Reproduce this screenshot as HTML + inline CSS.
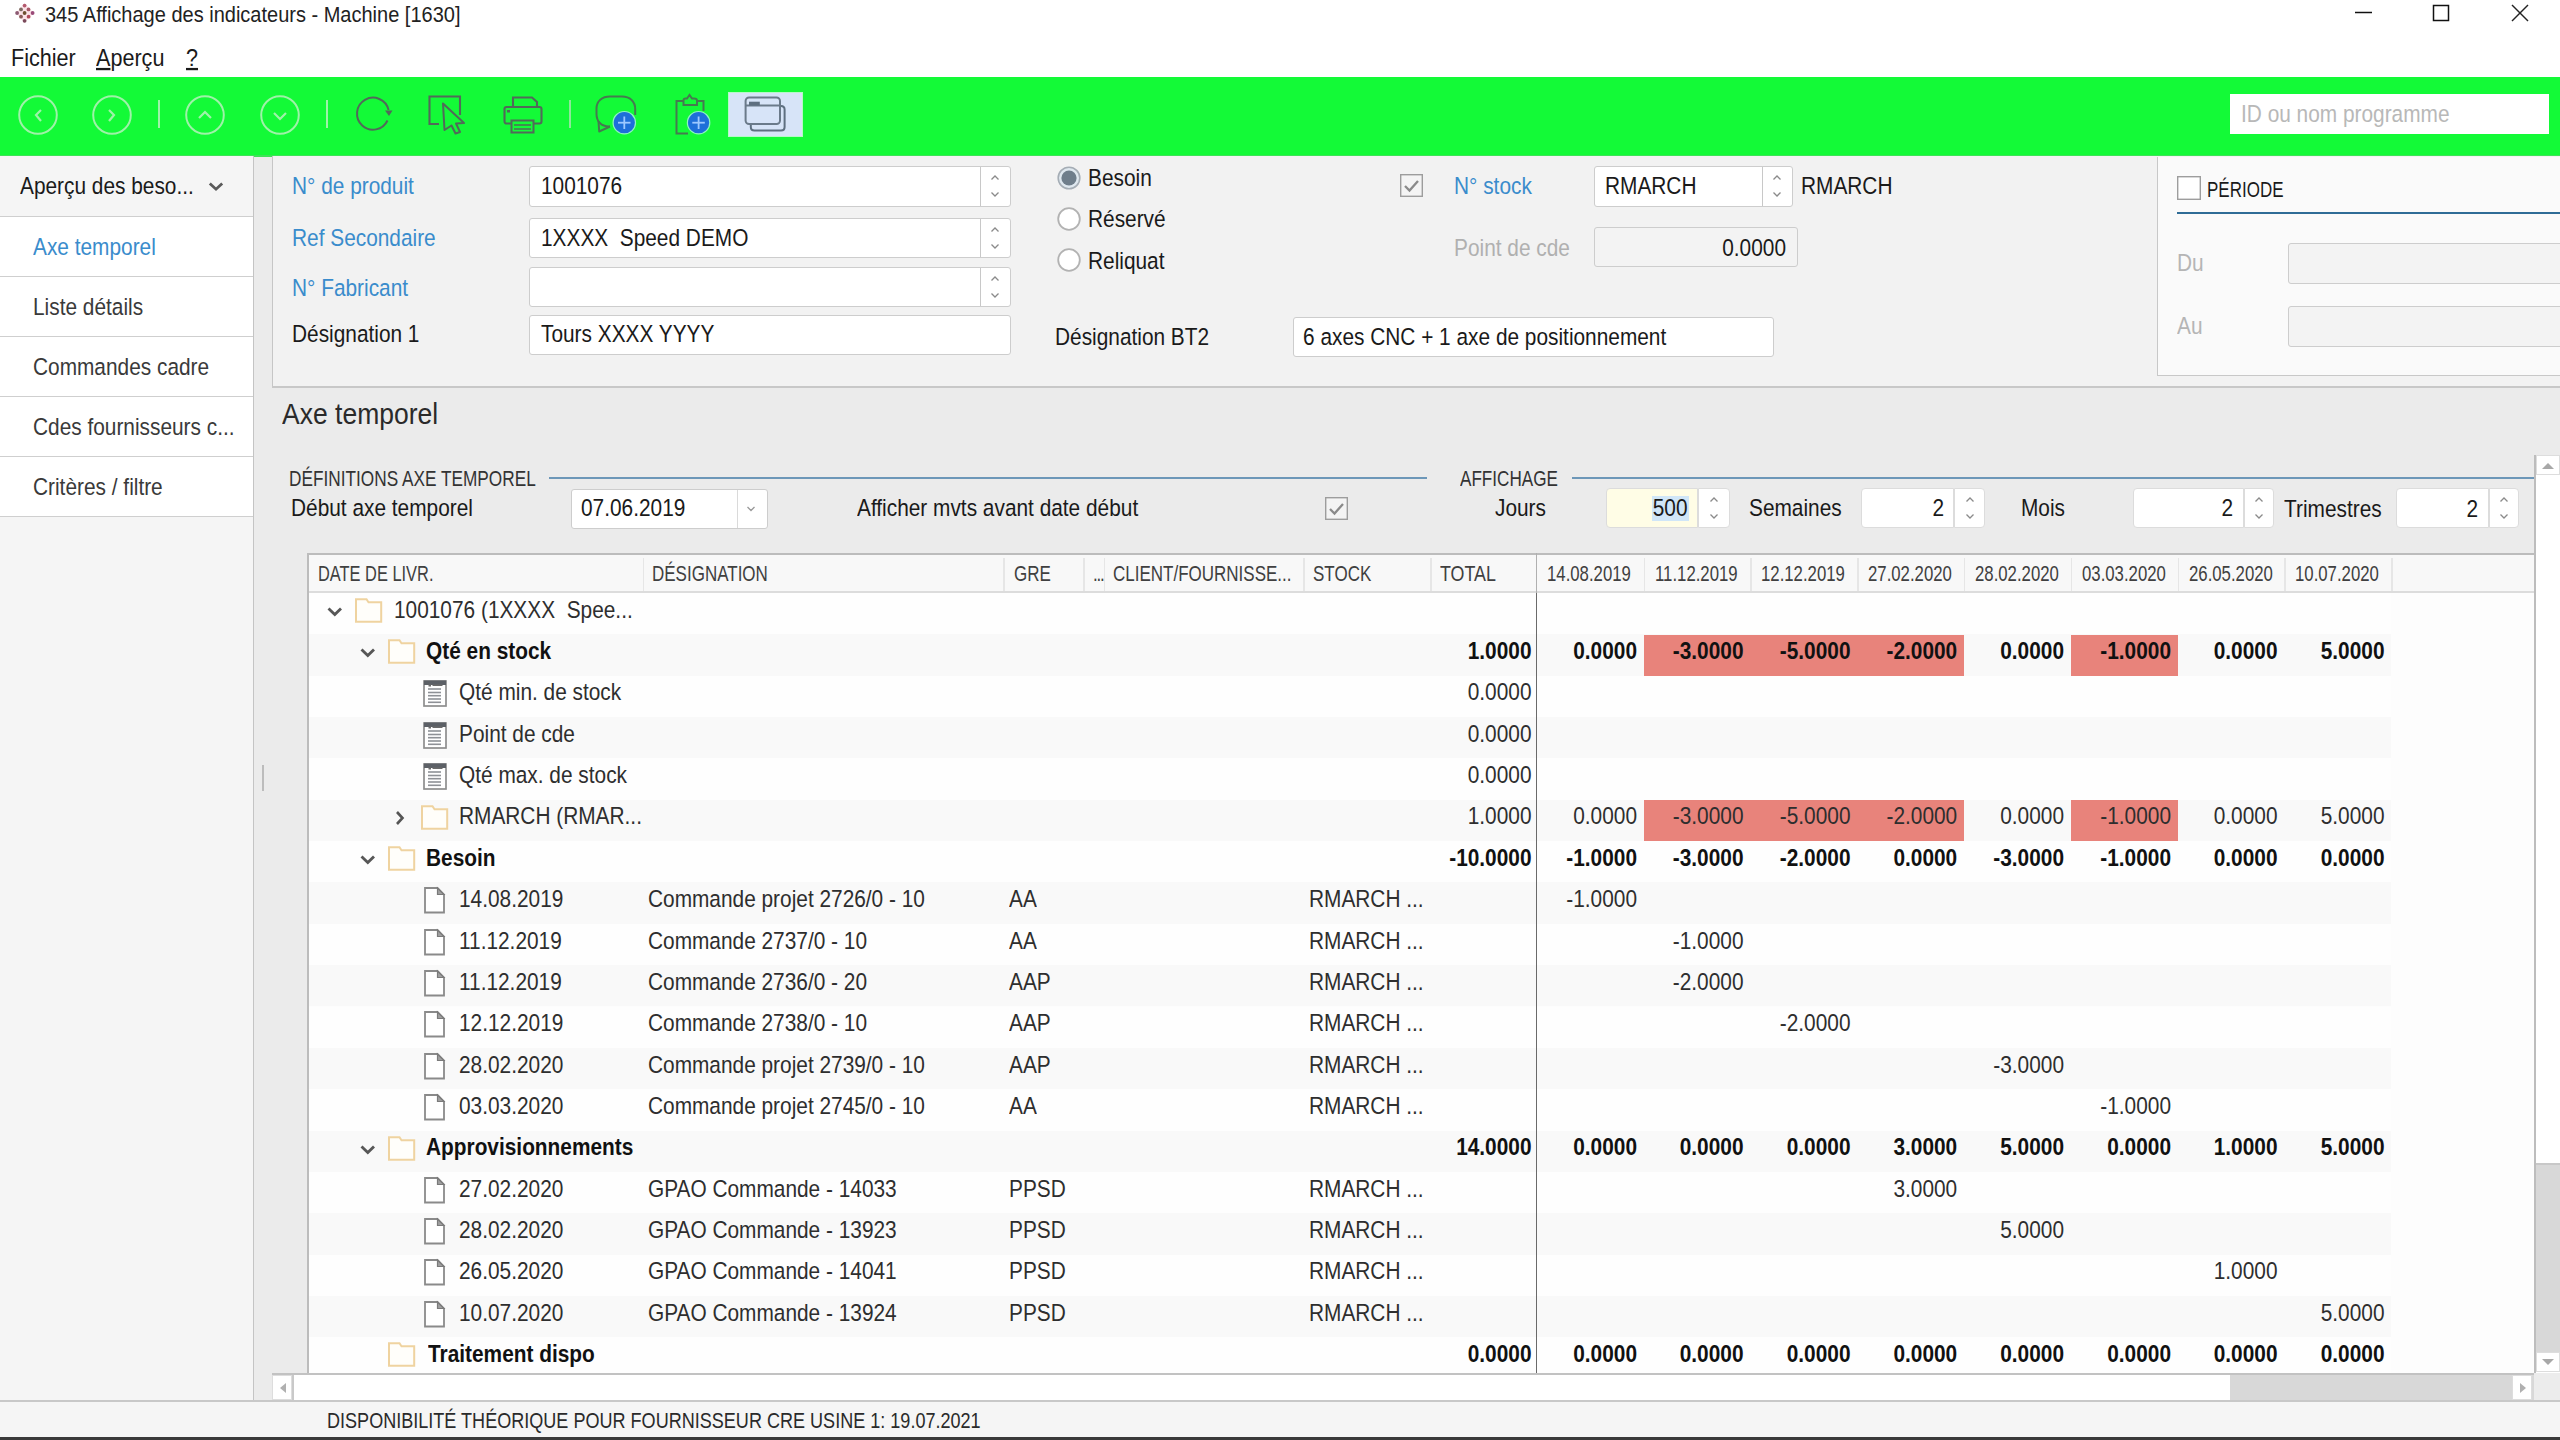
<!DOCTYPE html><html><head><meta charset="utf-8"><style>
html,body{margin:0;padding:0;width:2560px;height:1440px;overflow:hidden;background:#ebebeb;}
body{position:relative;font-family:"Liberation Sans", sans-serif;}
.t{position:absolute;white-space:nowrap;line-height:1;transform:scaleY(1.14);transform-origin:0 62%;}
.b{position:absolute;box-sizing:border-box;}
svg{position:absolute;overflow:visible;}
</style></head><body>
<div class="b" style="left:0px;top:0px;width:2560px;height:77px;background:#ffffff;"></div>
<svg style="left:0;top:0" width="50" height="30"><polygon points="24.6,3 33.5,13 24.6,23 16,13" fill="#fbe3e8"/><circle cx="24.6" cy="5.6" r="1.9" fill="#b45a6e"/><circle cx="21.0" cy="9.4" r="1.9" fill="#7e6a62"/><circle cx="28.5" cy="9.4" r="1.9" fill="#a85a68"/><circle cx="17.1" cy="13" r="1.9" fill="#8c5a72"/><circle cx="24.6" cy="13" r="1.9" fill="#6e5030"/><circle cx="32.6" cy="13" r="1.9" fill="#9a4a78"/><circle cx="21.0" cy="16.7" r="1.9" fill="#8a5a58"/><circle cx="28.6" cy="16.7" r="1.9" fill="#b04a5a"/><circle cx="24.6" cy="20.8" r="1.9" fill="#7a4a5a"/></svg>
<div class="t" style="left:45px;top:4px;font-size:20px;color:#222;">345 Affichage des indicateurs - Machine [1630]</div>
<svg style="left:2340px;top:0" width="220" height="30"><line x1="15" y1="12.5" x2="32" y2="12.5" stroke="#111" stroke-width="1.5"/><rect x="93.5" y="5.5" width="15" height="15" fill="none" stroke="#111" stroke-width="1.5"/><line x1="172" y1="5" x2="188" y2="21" stroke="#222" stroke-width="1.5"/><line x1="188" y1="5" x2="172" y2="21" stroke="#222" stroke-width="1.5"/></svg>
<div class="t" style="left:11px;top:47px;font-size:21.6px;color:#1a1a1a;">Fichier</div>
<div class="t" style="left:96px;top:47px;font-size:21.6px;color:#1a1a1a;"><u>A</u>perçu</div>
<div class="t" style="left:186px;top:47px;font-size:21.6px;color:#1a1a1a;"><u>?</u></div>
<div class="b" style="left:0px;top:77px;width:2560px;height:80px;background:#13fa37;"></div>
<div class="b" style="left:0px;top:154.5px;width:2560px;height:2.5px;background:#3ee257;"></div>
<svg style="left:12.5px;top:90px" width="50" height="50"><circle cx="25" cy="25" r="18.8" fill="none" stroke="#9ff2a9" stroke-width="2"/><polyline points="28,20 23,25 28,31" fill="none" stroke="#9ff2a9" stroke-width="2.2"/></svg>
<svg style="left:87px;top:90px" width="50" height="50"><circle cx="25" cy="25" r="18.8" fill="none" stroke="#9ff2a9" stroke-width="2"/><polyline points="22,20 27,25 22,31" fill="none" stroke="#9ff2a9" stroke-width="2.2"/></svg>
<svg style="left:180px;top:90px" width="50" height="50"><circle cx="25" cy="25" r="18.8" fill="none" stroke="#9ff2a9" stroke-width="2"/><polyline points="19,28 25,22 31,28" fill="none" stroke="#9ff2a9" stroke-width="2.2"/></svg>
<svg style="left:254.5px;top:90px" width="50" height="50"><circle cx="25" cy="25" r="18.8" fill="none" stroke="#9ff2a9" stroke-width="2"/><polyline points="19,23 25,29 31,23" fill="none" stroke="#9ff2a9" stroke-width="2.2"/></svg>
<div class="b" style="left:158px;top:100px;width:2px;height:28px;background:#9ff2a9;"></div>
<div class="b" style="left:325.5px;top:100px;width:2px;height:28px;background:#9ff2a9;"></div>
<div class="b" style="left:569px;top:100px;width:1.5px;height:28px;background:#8ee89a;"></div>
<svg style="left:340px;top:80px" width="60" height="60"><path d="M 47.5 40.5 A 16 16 0 1 1 48.6 30" fill="none" stroke="#52695a" stroke-width="2.0"/><polygon points="45,30.5 52.5,30.5 49,36" fill="#52695a"/></svg>
<svg style="left:420px;top:90px" width="60" height="50"><polyline points="19,34 9.5,34 9.5,6.5 40,6.5 40,25" fill="none" stroke="#52695a" stroke-width="2.1"/><path d="M 23 13.5 L 44 33 L 36 33.5 L 40 42 L 35.5 43.5 L 31.5 35.5 L 24.5 40 Z" fill="none" stroke="#52695a" stroke-width="2.0" stroke-linejoin="round"/></svg>
<svg style="left:500px;top:90px" width="50" height="50"><path d="M 13 16 L 13 7.5 L 32 7.5 L 37 12 L 37 16" fill="none" stroke="#52695a" stroke-width="2.1"/><rect x="4.5" y="17" width="37" height="16.5" rx="2" fill="none" stroke="#52695a" stroke-width="2.1"/><rect x="11.5" y="30.5" width="22" height="12" fill="#13fa37" stroke="#52695a" stroke-width="2.0"/><line x1="14" y1="35" x2="31" y2="35" stroke="#52695a" stroke-width="1.5"/><line x1="14" y1="39" x2="31" y2="39" stroke="#52695a" stroke-width="1.5"/><rect x="7" y="20" width="3" height="2.5" fill="#52695a"/></svg>
<svg style="left:590px;top:90px" width="60" height="50"><path d="M 20 36.5 C 11 37 6.5 31 6.5 24 L 6.5 18.5 C 6.5 11 12 6.5 20 6.5 L 32 6.5 C 40 6.5 45.2 11.5 45.2 19 L 45.2 25" fill="none" stroke="#467a50" stroke-width="2.0"/><path d="M 8.5 31 L 9.2 41.5 L 20 36.5" fill="none" stroke="#467a50" stroke-width="2.0" stroke-linejoin="round"/><circle cx="34.3" cy="32.7" r="11.2" fill="#1e6fd9" stroke="#8ff5c0" stroke-width="1.2"/><line x1="34.3" y1="26.5" x2="34.3" y2="39" stroke="#9cc8ff" stroke-width="1.8"/><line x1="28" y1="32.7" x2="40.5" y2="32.7" stroke="#9cc8ff" stroke-width="1.8"/></svg>
<svg style="left:665px;top:90px" width="60" height="50"><path d="M 23 43.5 L 11.5 43.5 L 11.5 11 L 18.5 11 M 32 11 L 38.5 11 L 38.5 21" fill="none" stroke="#467a50" stroke-width="2.0"/><path d="M 18.5 15 L 18.5 10.5 Q 18.5 8.5 20.5 8.5 L 22 8.5 L 24.5 5 L 27 8.5 L 29 8.5 Q 32 8.5 32 10.5 L 32 15 Z" fill="none" stroke="#467a50" stroke-width="2"/><circle cx="33.6" cy="32.7" r="11.2" fill="#1e6fd9" stroke="#8ff5c0" stroke-width="1.2"/><line x1="33.6" y1="26.5" x2="33.6" y2="39" stroke="#9cc8ff" stroke-width="1.8"/><line x1="27.3" y1="32.7" x2="39.8" y2="32.7" stroke="#9cc8ff" stroke-width="1.8"/></svg>
<div class="b" style="left:728px;top:92px;width:74.5px;height:45px;background:#d7e4f8;border:1.5px solid #b8f8c8;"></div>
<svg style="left:728px;top:92px" width="75" height="45"><path d="M 22.8 32 L 22.8 35 Q 22.8 38.5 26.5 38.5 L 53 38.5 Q 56.6 38.5 56.6 35 L 56.6 17.5 Q 56.6 14 53 14 L 52 14" fill="none" stroke="#5e6f80" stroke-width="2"/><rect x="17.6" y="5.5" width="34.4" height="26.5" rx="3.5" fill="#d7e4f8" stroke="#6a7a8a" stroke-width="2"/><line x1="17.6" y1="13.4" x2="52" y2="13.4" stroke="#6a7a8a" stroke-width="2"/><rect x="21" y="9.7" width="10.8" height="3.7" fill="#5e6f80"/></svg>
<div class="b" style="left:2230px;top:93.5px;width:319px;height:40px;background:#ffffff;"></div>
<div class="t" style="left:2241px;top:104px;font-size:20.85px;color:#b8b8b8;">ID ou nom programme</div>
<div class="b" style="left:0px;top:156px;width:254px;height:1244px;background:#f5f5f5;border-right:1.5px solid #c4c4c4;"></div>
<div class="t" style="left:20px;top:176px;font-size:20.85px;color:#1a1a1a;">Aperçu des beso...</div>
<svg style="left:205px;top:178px" width="22" height="16"><polyline points="4.8,5.5 11,11.2 17.2,5.5" fill="none" stroke="#5a5a5a" stroke-width="2.8"/></svg>
<div class="b" style="left:0px;top:216px;width:253px;height:61px;background:#ffffff;border-top:1px solid #cfcfcf;border-bottom:1px solid #cfcfcf;"></div>
<div class="t" style="left:33px;top:237px;font-size:20.85px;color:#3a8ccc;">Axe temporel</div>
<div class="b" style="left:0px;top:276px;width:253px;height:61px;background:#ffffff;border-top:1px solid #cfcfcf;border-bottom:1px solid #cfcfcf;"></div>
<div class="t" style="left:33px;top:297px;font-size:20.85px;color:#3a3a3a;">Liste détails</div>
<div class="b" style="left:0px;top:336px;width:253px;height:61px;background:#ffffff;border-top:1px solid #cfcfcf;border-bottom:1px solid #cfcfcf;"></div>
<div class="t" style="left:33px;top:357px;font-size:20.85px;color:#3a3a3a;">Commandes cadre</div>
<div class="b" style="left:0px;top:396px;width:253px;height:61px;background:#ffffff;border-top:1px solid #cfcfcf;border-bottom:1px solid #cfcfcf;"></div>
<div class="t" style="left:33px;top:417px;font-size:20.85px;color:#3a3a3a;">Cdes fournisseurs c...</div>
<div class="b" style="left:0px;top:456px;width:253px;height:61px;background:#ffffff;border-top:1px solid #cfcfcf;border-bottom:1px solid #cfcfcf;"></div>
<div class="t" style="left:33px;top:477px;font-size:20.85px;color:#3a3a3a;">Critères / filtre</div>
<div class="b" style="left:272px;top:156px;width:2288px;height:232px;background:#f2f2f2;border-left:1px solid #c6c6c6;border-bottom:2px solid #c8c8c8;"></div>
<div class="t" style="left:292px;top:176px;font-size:20.85px;color:#3a8ccc;">N° de produit</div>
<div class="t" style="left:292px;top:228px;font-size:20.85px;color:#3a8ccc;">Ref Secondaire</div>
<div class="t" style="left:292px;top:278px;font-size:20.85px;color:#3a8ccc;">N° Fabricant</div>
<div class="t" style="left:292px;top:324px;font-size:20.85px;color:#1a1a1a;">Désignation 1</div>
<div class="b" style="left:529px;top:166px;width:482px;height:40.5px;background:#ffffff;border:1px solid #cdcdcd;border-radius:3px;"></div>
<div class="b" style="left:980px;top:167px;width:1.3px;height:38.5px;background:#c8c8c8;"></div>
<svg style="left:989px;top:172.25px" width="12" height="28"><polyline points="2.5,7.5 6,4 9.5,7.5" fill="none" stroke="#8a8a8a" stroke-width="1.3"/><polyline points="2.5,20.5 6,24 9.5,20.5" fill="none" stroke="#8a8a8a" stroke-width="1.3"/></svg>
<div class="b" style="left:529px;top:218px;width:482px;height:39.5px;background:#ffffff;border:1px solid #cdcdcd;border-radius:3px;"></div>
<div class="b" style="left:980px;top:219px;width:1.3px;height:37.5px;background:#c8c8c8;"></div>
<svg style="left:989px;top:223.75px" width="12" height="28"><polyline points="2.5,7.5 6,4 9.5,7.5" fill="none" stroke="#8a8a8a" stroke-width="1.3"/><polyline points="2.5,20.5 6,24 9.5,20.5" fill="none" stroke="#8a8a8a" stroke-width="1.3"/></svg>
<div class="b" style="left:529px;top:267px;width:482px;height:40px;background:#ffffff;border:1px solid #cdcdcd;border-radius:3px;"></div>
<div class="b" style="left:980px;top:268px;width:1.3px;height:38px;background:#c8c8c8;"></div>
<svg style="left:989px;top:273.0px" width="12" height="28"><polyline points="2.5,7.5 6,4 9.5,7.5" fill="none" stroke="#8a8a8a" stroke-width="1.3"/><polyline points="2.5,20.5 6,24 9.5,20.5" fill="none" stroke="#8a8a8a" stroke-width="1.3"/></svg>
<div class="b" style="left:529px;top:314.5px;width:482px;height:40px;background:#ffffff;border:1px solid #cdcdcd;border-radius:3px;"></div>
<div class="t" style="left:541px;top:176px;font-size:20.85px;color:#1a1a1a;">1001076</div>
<div class="t" style="left:541px;top:228px;font-size:20.85px;color:#1a1a1a;">1XXXX&nbsp; Speed DEMO</div>
<div class="t" style="left:541px;top:324px;font-size:20.85px;color:#1a1a1a;">Tours XXXX YYYY</div>
<svg style="left:1057px;top:165.5px" width="24" height="24"><circle cx="12" cy="12" r="10.8" fill="#dfe8ef" stroke="#a5adb5" stroke-width="1.6"/><circle cx="12" cy="12" r="7.6" fill="#6f7e8b"/></svg>
<svg style="left:1057px;top:206.5px" width="24" height="24"><circle cx="12" cy="12" r="10.8" fill="#ffffff" stroke="#b2b2b2" stroke-width="1.8"/></svg>
<svg style="left:1057px;top:248px" width="24" height="24"><circle cx="12" cy="12" r="10.8" fill="#ffffff" stroke="#b2b2b2" stroke-width="1.8"/></svg>
<div class="t" style="left:1088px;top:168px;font-size:20.85px;color:#1a1a1a;">Besoin</div>
<div class="t" style="left:1088px;top:209px;font-size:20.85px;color:#1a1a1a;">Réservé</div>
<div class="t" style="left:1088px;top:251px;font-size:20.85px;color:#1a1a1a;">Reliquat</div>
<svg style="left:1400px;top:174px" width="23" height="23"><rect x="0.7" y="0.7" width="21.6" height="21.6" fill="#f4f4f4" stroke="#9d9d9d" stroke-width="1.4"/><polyline points="5,12 9.5,16.5 18,7" fill="none" stroke="#8a8a8a" stroke-width="2.3"/></svg>
<div class="t" style="left:1454px;top:176px;font-size:20.85px;color:#3a8ccc;">N° stock</div>
<div class="b" style="left:1594px;top:166px;width:199px;height:40.5px;background:#ffffff;border:1px solid #cdcdcd;border-radius:3px;"></div>
<div class="b" style="left:1762px;top:167px;width:1.3px;height:38.5px;background:#c8c8c8;"></div>
<svg style="left:1771px;top:172.25px" width="12" height="28"><polyline points="2.5,7.5 6,4 9.5,7.5" fill="none" stroke="#8a8a8a" stroke-width="1.3"/><polyline points="2.5,20.5 6,24 9.5,20.5" fill="none" stroke="#8a8a8a" stroke-width="1.3"/></svg>
<div class="t" style="left:1605px;top:176px;font-size:20.85px;color:#1a1a1a;">RMARCH</div>
<div class="t" style="left:1801px;top:176px;font-size:20.85px;color:#1a1a1a;">RMARCH</div>
<div class="t" style="left:1454px;top:238px;font-size:20.85px;color:#b0b0b0;">Point de cde</div>
<div class="b" style="left:1594px;top:227px;width:204px;height:40px;background:#f3f3f3;border:1px solid #cdcdcd;border-radius:3px;"></div>
<div class="t" style="left:1586px;width:200px;text-align:right;top:238px;font-size:20.85px;color:#1a1a1a;">0.0000</div>
<div class="t" style="left:1055px;top:327px;font-size:20.85px;color:#1a1a1a;">Désignation BT2</div>
<div class="b" style="left:1293px;top:316.5px;width:481px;height:40px;background:#ffffff;border:1px solid #cdcdcd;border-radius:3px;"></div>
<div class="t" style="left:1303px;top:327px;font-size:20.85px;color:#1a1a1a;">6 axes CNC + 1 axe de positionnement</div>
<div class="b" style="left:2157px;top:157px;width:403px;height:219px;background:#fafafa;border-left:1px solid #c8c8c8;border-bottom:1px solid #c8c8c8;"></div>
<svg style="left:2177px;top:176px" width="24" height="24"><rect x="0.7" y="0.7" width="22.6" height="22.6" fill="#ffffff" stroke="#9d9d9d" stroke-width="1.4"/></svg>
<div class="t" style="left:2207px;top:179px;font-size:20px;color:#1a1a1a;transform:scale(0.85,1.14);transform-origin:0 62%;">PÉRIODE</div>
<div class="b" style="left:2177px;top:211.5px;width:383px;height:2.5px;background:#2f6c96;"></div>
<div class="t" style="left:2177px;top:253px;font-size:20.85px;color:#b5b5b5;">Du</div>
<div class="t" style="left:2177px;top:316px;font-size:20.85px;color:#b5b5b5;">Au</div>
<div class="b" style="left:2288px;top:243px;width:290px;height:40.5px;background:#f3f3f3;border:1px solid #cdcdcd;border-radius:3px;"></div>
<div class="b" style="left:2288px;top:306px;width:290px;height:40.5px;background:#f3f3f3;border:1px solid #cdcdcd;border-radius:3px;"></div>
<div class="t" style="left:282px;top:400.5px;font-size:26.5px;color:#2a2a2a;">Axe temporel</div>
<div class="t" style="left:289px;top:469px;font-size:19px;color:#333;transform:scale(0.907,1.14);transform-origin:0 62%;">DÉFINITIONS AXE TEMPOREL</div>
<div class="b" style="left:549px;top:476.5px;width:878px;height:2px;background:#6d97b8;"></div>
<div class="t" style="left:1460px;top:469px;font-size:19px;color:#333;transform:scale(0.9,1.14);transform-origin:0 62%;">AFFICHAGE</div>
<div class="b" style="left:1572px;top:476.5px;width:962px;height:2px;background:#6d97b8;"></div>
<div class="t" style="left:291px;top:498px;font-size:20.85px;color:#1a1a1a;">Début axe temporel</div>
<div class="b" style="left:571px;top:489px;width:197px;height:40px;background:#ffffff;border:1px solid #cdcdcd;border-radius:3px;"></div>
<div class="b" style="left:737px;top:490px;width:1px;height:38px;background:#dadada;"></div>
<svg style="left:744px;top:502px" width="14" height="14"><polyline points="3.5,5 7,8.5 10.5,5" fill="none" stroke="#999" stroke-width="1.3"/></svg>
<div class="t" style="left:581px;top:498px;font-size:20.85px;color:#1a1a1a;">07.06.2019</div>
<div class="t" style="left:857px;top:498px;font-size:20.85px;color:#1a1a1a;">Afficher mvts avant date début</div>
<svg style="left:1325px;top:497px" width="23" height="23"><rect x="0.7" y="0.7" width="21.6" height="21.6" fill="#f4f4f4" stroke="#9d9d9d" stroke-width="1.4"/><polyline points="5,12 9.5,16.5 18,7" fill="none" stroke="#8a8a8a" stroke-width="2.3"/></svg>
<div class="t" style="left:1495px;top:498px;font-size:20.85px;color:#1a1a1a;">Jours</div>
<div class="b" style="left:1606px;top:488px;width:92px;height:40px;background:#fffde6;border:1px solid #dcdcdc;border-radius:4px 0 0 4px;"></div>
<div class="b" style="left:1698px;top:488px;width:32px;height:40px;background:#ffffff;border:1px solid #dcdcdc;border-radius:0 4px 4px 0;"></div>
<svg style="left:1708.0px;top:494px" width="12" height="28"><polyline points="2.5,7.5 6,4 9.5,7.5" fill="none" stroke="#8a8a8a" stroke-width="1.3"/><polyline points="2.5,20.5 6,24 9.5,20.5" fill="none" stroke="#8a8a8a" stroke-width="1.3"/></svg>
<div class="b" style="left:1651.5px;top:496px;width:37px;height:25px;background:#d0e6f8;"></div>
<div class="t" style="left:1587.5px;width:100px;text-align:right;top:497.5px;font-size:20.85px;color:#1a1a1a;">500</div>
<div class="t" style="left:1749px;top:498px;font-size:20.85px;color:#1a1a1a;">Semaines</div>
<div class="b" style="left:1861px;top:488px;width:93px;height:40px;background:#ffffff;border:1px solid #dcdcdc;border-radius:4px 0 0 4px;"></div>
<div class="b" style="left:1954px;top:488px;width:31px;height:40px;background:#ffffff;border:1px solid #dcdcdc;border-radius:0 4px 4px 0;"></div>
<svg style="left:1963.5px;top:494px" width="12" height="28"><polyline points="2.5,7.5 6,4 9.5,7.5" fill="none" stroke="#8a8a8a" stroke-width="1.3"/><polyline points="2.5,20.5 6,24 9.5,20.5" fill="none" stroke="#8a8a8a" stroke-width="1.3"/></svg>
<div class="t" style="left:1884px;width:60px;text-align:right;top:498px;font-size:20.85px;color:#1a1a1a;">2</div>
<div class="t" style="left:2021px;top:498px;font-size:20.85px;color:#1a1a1a;">Mois</div>
<div class="b" style="left:2133px;top:488px;width:111px;height:40px;background:#ffffff;border:1px solid #dcdcdc;border-radius:4px 0 0 4px;"></div>
<div class="b" style="left:2244px;top:488px;width:30px;height:40px;background:#ffffff;border:1px solid #dcdcdc;border-radius:0 4px 4px 0;"></div>
<svg style="left:2253.0px;top:494px" width="12" height="28"><polyline points="2.5,7.5 6,4 9.5,7.5" fill="none" stroke="#8a8a8a" stroke-width="1.3"/><polyline points="2.5,20.5 6,24 9.5,20.5" fill="none" stroke="#8a8a8a" stroke-width="1.3"/></svg>
<div class="t" style="left:2173px;width:60px;text-align:right;top:498px;font-size:20.85px;color:#1a1a1a;">2</div>
<div class="t" style="left:2284px;top:499px;font-size:20.85px;color:#1a1a1a;">Trimestres</div>
<div class="b" style="left:2396px;top:488px;width:93px;height:40px;background:#ffffff;border:1px solid #dcdcdc;border-radius:4px 0 0 4px;"></div>
<div class="b" style="left:2489px;top:488px;width:30px;height:40px;background:#ffffff;border:1px solid #dcdcdc;border-radius:0 4px 4px 0;"></div>
<svg style="left:2498.0px;top:494px" width="12" height="28"><polyline points="2.5,7.5 6,4 9.5,7.5" fill="none" stroke="#8a8a8a" stroke-width="1.3"/><polyline points="2.5,20.5 6,24 9.5,20.5" fill="none" stroke="#8a8a8a" stroke-width="1.3"/></svg>
<div class="t" style="left:2418px;width:60px;text-align:right;top:499px;font-size:20.85px;color:#1a1a1a;">2</div>
<div class="b" style="left:307px;top:552.5px;width:2227px;height:821.5px;background:#fdfdfd;border-left:2px solid #bcbcbc;border-top:2px solid #bcbcbc;"></div>
<div class="b" style="left:309px;top:554.5px;width:2225px;height:38px;background:#f8f8f8;border-bottom:2px solid #dcdcdc;"></div>
<div class="b" style="left:642.6px;top:558px;width:1.5px;height:33px;background:#e6e6e6;"></div>
<div class="b" style="left:1003px;top:558px;width:1.5px;height:33px;background:#e6e6e6;"></div>
<div class="b" style="left:1083px;top:558px;width:1.5px;height:33px;background:#e6e6e6;"></div>
<div class="b" style="left:1103.7px;top:558px;width:1.5px;height:33px;background:#e6e6e6;"></div>
<div class="b" style="left:1303px;top:558px;width:1.5px;height:33px;background:#e6e6e6;"></div>
<div class="b" style="left:1430px;top:558px;width:1.5px;height:33px;background:#e6e6e6;"></div>
<div class="b" style="left:1643.5px;top:558px;width:1.5px;height:33px;background:#e6e6e6;"></div>
<div class="b" style="left:1750px;top:558px;width:1.5px;height:33px;background:#e6e6e6;"></div>
<div class="b" style="left:1857px;top:558px;width:1.5px;height:33px;background:#e6e6e6;"></div>
<div class="b" style="left:1963.7px;top:558px;width:1.5px;height:33px;background:#e6e6e6;"></div>
<div class="b" style="left:2070.5px;top:558px;width:1.5px;height:33px;background:#e6e6e6;"></div>
<div class="b" style="left:2177.5px;top:558px;width:1.5px;height:33px;background:#e6e6e6;"></div>
<div class="b" style="left:2284px;top:558px;width:1.5px;height:33px;background:#e6e6e6;"></div>
<div class="b" style="left:2391px;top:558px;width:1.5px;height:33px;background:#e6e6e6;"></div>
<div class="t" style="left:318px;top:563px;font-size:20px;color:#404040;transform:scale(0.82,1.14);transform-origin:0 62%;">DATE DE LIVR.</div>
<div class="t" style="left:652px;top:563px;font-size:20px;color:#404040;transform:scale(0.85,1.14);transform-origin:0 62%;">DÉSIGNATION</div>
<div class="t" style="left:1014px;top:563px;font-size:20px;color:#404040;transform:scale(0.85,1.14);transform-origin:0 62%;">GRE</div>
<div class="t" style="left:1092.5px;top:563px;font-size:20px;color:#404040;transform:scale(0.85,1.14);transform-origin:0 62%;"><span style="letter-spacing:-1.5px">...</span></div>
<div class="t" style="left:1113px;top:563px;font-size:20px;color:#404040;transform:scale(0.85,1.14);transform-origin:0 62%;">CLIENT/FOURNISSE...</div>
<div class="t" style="left:1313px;top:563px;font-size:20px;color:#404040;transform:scale(0.85,1.14);transform-origin:0 62%;">STOCK</div>
<div class="t" style="left:1440px;top:563px;font-size:20px;color:#404040;transform:scale(0.894,1.14);transform-origin:0 62%;">TOTAL</div>
<div class="t" style="left:1547px;top:563px;font-size:20px;color:#404040;transform:scale(0.838,1.14);transform-origin:0 62%;">14.08.2019</div>
<div class="t" style="left:1654.5px;top:563px;font-size:20px;color:#404040;transform:scale(0.838,1.14);transform-origin:0 62%;">11.12.2019</div>
<div class="t" style="left:1761px;top:563px;font-size:20px;color:#404040;transform:scale(0.838,1.14);transform-origin:0 62%;">12.12.2019</div>
<div class="t" style="left:1868px;top:563px;font-size:20px;color:#404040;transform:scale(0.838,1.14);transform-origin:0 62%;">27.02.2020</div>
<div class="t" style="left:1974.7px;top:563px;font-size:20px;color:#404040;transform:scale(0.838,1.14);transform-origin:0 62%;">28.02.2020</div>
<div class="t" style="left:2081.5px;top:563px;font-size:20px;color:#404040;transform:scale(0.838,1.14);transform-origin:0 62%;">03.03.2020</div>
<div class="t" style="left:2188.5px;top:563px;font-size:20px;color:#404040;transform:scale(0.838,1.14);transform-origin:0 62%;">26.05.2020</div>
<div class="t" style="left:2295px;top:563px;font-size:20px;color:#404040;transform:scale(0.838,1.14);transform-origin:0 62%;">10.07.2020</div>
<div class="b" style="left:309px;top:593.0px;width:2082px;height:41.35px;background:#fefefe;"></div>
<svg style="left:324px;top:598.0px" width="24" height="30"><polyline points="4.5,10.4 10.8,16.6 17,10.4" fill="none" stroke="#575757" stroke-width="2.8"/></svg>
<svg style="left:355px;top:598.0px" width="28" height="26"><path d="M 1 23.8 L 1 1.2 L 11.5 1.2 L 13.5 4.2 L 26.2 4.2 L 26.2 23.8 Z" fill="#fffefa" stroke="#efd3a0" stroke-width="2"/></svg>
<div class="t" style="left:394px;top:599.7px;font-size:20.85px;color:#2e2e2e;">1001076 (1XXXX&nbsp; Spee...</div>
<div class="b" style="left:309px;top:634.35px;width:2082px;height:41.35px;background:#f9f9f9;"></div>
<div class="b" style="left:1644.0px;top:634.85px;width:106.5px;height:41.35px;background:#e8837b;"></div>
<div class="b" style="left:1750.5px;top:634.85px;width:107px;height:41.35px;background:#e8837b;"></div>
<div class="b" style="left:1857.5px;top:634.85px;width:106.70000000000005px;height:41.35px;background:#e8837b;"></div>
<div class="b" style="left:2071.0px;top:634.85px;width:107.0px;height:41.35px;background:#e8837b;"></div>
<svg style="left:357px;top:639.35px" width="24" height="30"><polyline points="4.5,10.4 10.8,16.6 17,10.4" fill="none" stroke="#575757" stroke-width="2.8"/></svg>
<svg style="left:388px;top:639.35px" width="28" height="26"><path d="M 1 23.8 L 1 1.2 L 11.5 1.2 L 13.5 4.2 L 26.2 4.2 L 26.2 23.8 Z" fill="#fffefa" stroke="#efd3a0" stroke-width="2"/></svg>
<div class="t" style="left:426px;top:641.0500000000001px;font-size:20.85px;color:#111111;font-weight:bold;">Qté en stock</div>
<div class="t" style="left:1381.5px;width:150px;text-align:right;top:641.0500000000001px;font-size:20.85px;color:#111111;font-weight:bold;">1.0000</div>
<div class="t" style="left:1537.0px;width:100px;text-align:right;top:641.0500000000001px;font-size:20.85px;color:#111111;font-weight:bold;">0.0000</div>
<div class="t" style="left:1643.5px;width:100px;text-align:right;top:641.0500000000001px;font-size:20.85px;color:#111111;font-weight:bold;">-3.0000</div>
<div class="t" style="left:1750.5px;width:100px;text-align:right;top:641.0500000000001px;font-size:20.85px;color:#111111;font-weight:bold;">-5.0000</div>
<div class="t" style="left:1857.2px;width:100px;text-align:right;top:641.0500000000001px;font-size:20.85px;color:#111111;font-weight:bold;">-2.0000</div>
<div class="t" style="left:1964.0px;width:100px;text-align:right;top:641.0500000000001px;font-size:20.85px;color:#111111;font-weight:bold;">0.0000</div>
<div class="t" style="left:2071.0px;width:100px;text-align:right;top:641.0500000000001px;font-size:20.85px;color:#111111;font-weight:bold;">-1.0000</div>
<div class="t" style="left:2177.5px;width:100px;text-align:right;top:641.0500000000001px;font-size:20.85px;color:#111111;font-weight:bold;">0.0000</div>
<div class="t" style="left:2284.5px;width:100px;text-align:right;top:641.0500000000001px;font-size:20.85px;color:#111111;font-weight:bold;">5.0000</div>
<div class="b" style="left:309px;top:675.7px;width:2082px;height:41.35px;background:#fefefe;"></div>
<svg style="left:422.5px;top:680.2px" width="25" height="29"><rect x="1" y="1" width="22" height="25" fill="#ffffff" stroke="#8e8e8e" stroke-width="1.7"/><rect x="1" y="0.5" width="22" height="4.5" fill="#5c6066"/><rect x="5.5" y="4.5" width="2.5" height="2" fill="#6a6a6a"/><rect x="9.5" y="4.5" width="10" height="1.5" fill="#6a6a6a"/><line x1="5" y1="9" x2="18" y2="9" stroke="#8e9196" stroke-width="1.6"/><line x1="5" y1="12.5" x2="18" y2="12.5" stroke="#8e9196" stroke-width="1.6"/><line x1="5" y1="15.7" x2="18" y2="15.7" stroke="#8e9196" stroke-width="1.6"/><line x1="5" y1="19" x2="18" y2="19" stroke="#8e9196" stroke-width="1.6"/><line x1="5" y1="22.3" x2="18" y2="22.3" stroke="#8e9196" stroke-width="1.6"/></svg>
<div class="t" style="left:459px;top:682.4000000000001px;font-size:20.85px;color:#2e2e2e;">Qté min. de stock</div>
<div class="t" style="left:1381.5px;width:150px;text-align:right;top:682.4000000000001px;font-size:20.85px;color:#2e2e2e;">0.0000</div>
<div class="b" style="left:309px;top:717.05px;width:2082px;height:41.35px;background:#f9f9f9;"></div>
<svg style="left:422.5px;top:721.55px" width="25" height="29"><rect x="1" y="1" width="22" height="25" fill="#ffffff" stroke="#8e8e8e" stroke-width="1.7"/><rect x="1" y="0.5" width="22" height="4.5" fill="#5c6066"/><rect x="5.5" y="4.5" width="2.5" height="2" fill="#6a6a6a"/><rect x="9.5" y="4.5" width="10" height="1.5" fill="#6a6a6a"/><line x1="5" y1="9" x2="18" y2="9" stroke="#8e9196" stroke-width="1.6"/><line x1="5" y1="12.5" x2="18" y2="12.5" stroke="#8e9196" stroke-width="1.6"/><line x1="5" y1="15.7" x2="18" y2="15.7" stroke="#8e9196" stroke-width="1.6"/><line x1="5" y1="19" x2="18" y2="19" stroke="#8e9196" stroke-width="1.6"/><line x1="5" y1="22.3" x2="18" y2="22.3" stroke="#8e9196" stroke-width="1.6"/></svg>
<div class="t" style="left:459px;top:723.75px;font-size:20.85px;color:#2e2e2e;">Point de cde</div>
<div class="t" style="left:1381.5px;width:150px;text-align:right;top:723.75px;font-size:20.85px;color:#2e2e2e;">0.0000</div>
<div class="b" style="left:309px;top:758.4px;width:2082px;height:41.35px;background:#fefefe;"></div>
<svg style="left:422.5px;top:762.9px" width="25" height="29"><rect x="1" y="1" width="22" height="25" fill="#ffffff" stroke="#8e8e8e" stroke-width="1.7"/><rect x="1" y="0.5" width="22" height="4.5" fill="#5c6066"/><rect x="5.5" y="4.5" width="2.5" height="2" fill="#6a6a6a"/><rect x="9.5" y="4.5" width="10" height="1.5" fill="#6a6a6a"/><line x1="5" y1="9" x2="18" y2="9" stroke="#8e9196" stroke-width="1.6"/><line x1="5" y1="12.5" x2="18" y2="12.5" stroke="#8e9196" stroke-width="1.6"/><line x1="5" y1="15.7" x2="18" y2="15.7" stroke="#8e9196" stroke-width="1.6"/><line x1="5" y1="19" x2="18" y2="19" stroke="#8e9196" stroke-width="1.6"/><line x1="5" y1="22.3" x2="18" y2="22.3" stroke="#8e9196" stroke-width="1.6"/></svg>
<div class="t" style="left:459px;top:765.1px;font-size:20.85px;color:#2e2e2e;">Qté max. de stock</div>
<div class="t" style="left:1381.5px;width:150px;text-align:right;top:765.1px;font-size:20.85px;color:#2e2e2e;">0.0000</div>
<div class="b" style="left:309px;top:799.75px;width:2082px;height:41.35px;background:#f9f9f9;"></div>
<div class="b" style="left:1644.0px;top:800.25px;width:106.5px;height:41.35px;background:#e8837b;"></div>
<div class="b" style="left:1750.5px;top:800.25px;width:107px;height:41.35px;background:#e8837b;"></div>
<div class="b" style="left:1857.5px;top:800.25px;width:106.70000000000005px;height:41.35px;background:#e8837b;"></div>
<div class="b" style="left:2071.0px;top:800.25px;width:107.0px;height:41.35px;background:#e8837b;"></div>
<svg style="left:390px;top:804.75px" width="20" height="30"><polyline points="7,7 12.5,13 7,19" fill="none" stroke="#555" stroke-width="2.6"/></svg>
<svg style="left:421px;top:804.75px" width="28" height="26"><path d="M 1 23.8 L 1 1.2 L 11.5 1.2 L 13.5 4.2 L 26.2 4.2 L 26.2 23.8 Z" fill="#fffefa" stroke="#efd3a0" stroke-width="2"/></svg>
<div class="t" style="left:459px;top:806.45px;font-size:20.85px;color:#2e2e2e;">RMARCH (RMAR...</div>
<div class="t" style="left:1381.5px;width:150px;text-align:right;top:806.45px;font-size:20.85px;color:#2e2e2e;">1.0000</div>
<div class="t" style="left:1537.0px;width:100px;text-align:right;top:806.45px;font-size:20.85px;color:#2e2e2e;">0.0000</div>
<div class="t" style="left:1643.5px;width:100px;text-align:right;top:806.45px;font-size:20.85px;color:#2e2e2e;">-3.0000</div>
<div class="t" style="left:1750.5px;width:100px;text-align:right;top:806.45px;font-size:20.85px;color:#2e2e2e;">-5.0000</div>
<div class="t" style="left:1857.2px;width:100px;text-align:right;top:806.45px;font-size:20.85px;color:#2e2e2e;">-2.0000</div>
<div class="t" style="left:1964.0px;width:100px;text-align:right;top:806.45px;font-size:20.85px;color:#2e2e2e;">0.0000</div>
<div class="t" style="left:2071.0px;width:100px;text-align:right;top:806.45px;font-size:20.85px;color:#2e2e2e;">-1.0000</div>
<div class="t" style="left:2177.5px;width:100px;text-align:right;top:806.45px;font-size:20.85px;color:#2e2e2e;">0.0000</div>
<div class="t" style="left:2284.5px;width:100px;text-align:right;top:806.45px;font-size:20.85px;color:#2e2e2e;">5.0000</div>
<div class="b" style="left:309px;top:841.1px;width:2082px;height:41.35px;background:#fefefe;"></div>
<svg style="left:357px;top:846.1px" width="24" height="30"><polyline points="4.5,10.4 10.8,16.6 17,10.4" fill="none" stroke="#575757" stroke-width="2.8"/></svg>
<svg style="left:388px;top:846.1px" width="28" height="26"><path d="M 1 23.8 L 1 1.2 L 11.5 1.2 L 13.5 4.2 L 26.2 4.2 L 26.2 23.8 Z" fill="#fffefa" stroke="#efd3a0" stroke-width="2"/></svg>
<div class="t" style="left:426px;top:847.8000000000001px;font-size:20.85px;color:#111111;font-weight:bold;">Besoin</div>
<div class="t" style="left:1381.5px;width:150px;text-align:right;top:847.8000000000001px;font-size:20.85px;color:#111111;font-weight:bold;">-10.0000</div>
<div class="t" style="left:1537.0px;width:100px;text-align:right;top:847.8000000000001px;font-size:20.85px;color:#111111;font-weight:bold;">-1.0000</div>
<div class="t" style="left:1643.5px;width:100px;text-align:right;top:847.8000000000001px;font-size:20.85px;color:#111111;font-weight:bold;">-3.0000</div>
<div class="t" style="left:1750.5px;width:100px;text-align:right;top:847.8000000000001px;font-size:20.85px;color:#111111;font-weight:bold;">-2.0000</div>
<div class="t" style="left:1857.2px;width:100px;text-align:right;top:847.8000000000001px;font-size:20.85px;color:#111111;font-weight:bold;">0.0000</div>
<div class="t" style="left:1964.0px;width:100px;text-align:right;top:847.8000000000001px;font-size:20.85px;color:#111111;font-weight:bold;">-3.0000</div>
<div class="t" style="left:2071.0px;width:100px;text-align:right;top:847.8000000000001px;font-size:20.85px;color:#111111;font-weight:bold;">-1.0000</div>
<div class="t" style="left:2177.5px;width:100px;text-align:right;top:847.8000000000001px;font-size:20.85px;color:#111111;font-weight:bold;">0.0000</div>
<div class="t" style="left:2284.5px;width:100px;text-align:right;top:847.8000000000001px;font-size:20.85px;color:#111111;font-weight:bold;">0.0000</div>
<div class="b" style="left:309px;top:882.45px;width:2082px;height:41.35px;background:#f9f9f9;"></div>
<svg style="left:424px;top:887.25px" width="23" height="28"><path d="M 1 1 L 13.5 1 L 20 7.5 L 20 25.5 L 1 25.5 Z" fill="#ffffff" stroke="#8a8a8a" stroke-width="1.8"/><path d="M 13.5 1 L 13.5 7.5 L 20 7.5 Z" fill="#a0a0a0" stroke="#7a7a7a" stroke-width="1.2"/></svg>
<div class="t" style="left:459px;top:889.1500000000001px;font-size:20.85px;color:#2e2e2e;">14.08.2019</div>
<div class="t" style="left:648px;top:889.1500000000001px;font-size:20.85px;color:#2e2e2e;">Commande projet 2726/0 - 10</div>
<div class="t" style="left:1009px;top:889.1500000000001px;font-size:20.85px;color:#2e2e2e;">AA</div>
<div class="t" style="left:1309px;top:889.1500000000001px;font-size:20.85px;color:#2e2e2e;">RMARCH ...</div>
<div class="t" style="left:1537.0px;width:100px;text-align:right;top:889.1500000000001px;font-size:20.85px;color:#2e2e2e;">-1.0000</div>
<div class="b" style="left:309px;top:923.8px;width:2082px;height:41.35px;background:#fefefe;"></div>
<svg style="left:424px;top:928.5999999999999px" width="23" height="28"><path d="M 1 1 L 13.5 1 L 20 7.5 L 20 25.5 L 1 25.5 Z" fill="#ffffff" stroke="#8a8a8a" stroke-width="1.8"/><path d="M 13.5 1 L 13.5 7.5 L 20 7.5 Z" fill="#a0a0a0" stroke="#7a7a7a" stroke-width="1.2"/></svg>
<div class="t" style="left:459px;top:930.5px;font-size:20.85px;color:#2e2e2e;">11.12.2019</div>
<div class="t" style="left:648px;top:930.5px;font-size:20.85px;color:#2e2e2e;">Commande 2737/0 - 10</div>
<div class="t" style="left:1009px;top:930.5px;font-size:20.85px;color:#2e2e2e;">AA</div>
<div class="t" style="left:1309px;top:930.5px;font-size:20.85px;color:#2e2e2e;">RMARCH ...</div>
<div class="t" style="left:1643.5px;width:100px;text-align:right;top:930.5px;font-size:20.85px;color:#2e2e2e;">-1.0000</div>
<div class="b" style="left:309px;top:965.1500000000001px;width:2082px;height:41.35px;background:#f9f9f9;"></div>
<svg style="left:424px;top:969.95px" width="23" height="28"><path d="M 1 1 L 13.5 1 L 20 7.5 L 20 25.5 L 1 25.5 Z" fill="#ffffff" stroke="#8a8a8a" stroke-width="1.8"/><path d="M 13.5 1 L 13.5 7.5 L 20 7.5 Z" fill="#a0a0a0" stroke="#7a7a7a" stroke-width="1.2"/></svg>
<div class="t" style="left:459px;top:971.8500000000001px;font-size:20.85px;color:#2e2e2e;">11.12.2019</div>
<div class="t" style="left:648px;top:971.8500000000001px;font-size:20.85px;color:#2e2e2e;">Commande 2736/0 - 20</div>
<div class="t" style="left:1009px;top:971.8500000000001px;font-size:20.85px;color:#2e2e2e;">AAP</div>
<div class="t" style="left:1309px;top:971.8500000000001px;font-size:20.85px;color:#2e2e2e;">RMARCH ...</div>
<div class="t" style="left:1643.5px;width:100px;text-align:right;top:971.8500000000001px;font-size:20.85px;color:#2e2e2e;">-2.0000</div>
<div class="b" style="left:309px;top:1006.5px;width:2082px;height:41.35px;background:#fefefe;"></div>
<svg style="left:424px;top:1011.3px" width="23" height="28"><path d="M 1 1 L 13.5 1 L 20 7.5 L 20 25.5 L 1 25.5 Z" fill="#ffffff" stroke="#8a8a8a" stroke-width="1.8"/><path d="M 13.5 1 L 13.5 7.5 L 20 7.5 Z" fill="#a0a0a0" stroke="#7a7a7a" stroke-width="1.2"/></svg>
<div class="t" style="left:459px;top:1013.2px;font-size:20.85px;color:#2e2e2e;">12.12.2019</div>
<div class="t" style="left:648px;top:1013.2px;font-size:20.85px;color:#2e2e2e;">Commande 2738/0 - 10</div>
<div class="t" style="left:1009px;top:1013.2px;font-size:20.85px;color:#2e2e2e;">AAP</div>
<div class="t" style="left:1309px;top:1013.2px;font-size:20.85px;color:#2e2e2e;">RMARCH ...</div>
<div class="t" style="left:1750.5px;width:100px;text-align:right;top:1013.2px;font-size:20.85px;color:#2e2e2e;">-2.0000</div>
<div class="b" style="left:309px;top:1047.85px;width:2082px;height:41.35px;background:#f9f9f9;"></div>
<svg style="left:424px;top:1052.6499999999999px" width="23" height="28"><path d="M 1 1 L 13.5 1 L 20 7.5 L 20 25.5 L 1 25.5 Z" fill="#ffffff" stroke="#8a8a8a" stroke-width="1.8"/><path d="M 13.5 1 L 13.5 7.5 L 20 7.5 Z" fill="#a0a0a0" stroke="#7a7a7a" stroke-width="1.2"/></svg>
<div class="t" style="left:459px;top:1054.55px;font-size:20.85px;color:#2e2e2e;">28.02.2020</div>
<div class="t" style="left:648px;top:1054.55px;font-size:20.85px;color:#2e2e2e;">Commande projet 2739/0 - 10</div>
<div class="t" style="left:1009px;top:1054.55px;font-size:20.85px;color:#2e2e2e;">AAP</div>
<div class="t" style="left:1309px;top:1054.55px;font-size:20.85px;color:#2e2e2e;">RMARCH ...</div>
<div class="t" style="left:1964.0px;width:100px;text-align:right;top:1054.55px;font-size:20.85px;color:#2e2e2e;">-3.0000</div>
<div class="b" style="left:309px;top:1089.2px;width:2082px;height:41.35px;background:#fefefe;"></div>
<svg style="left:424px;top:1094.0px" width="23" height="28"><path d="M 1 1 L 13.5 1 L 20 7.5 L 20 25.5 L 1 25.5 Z" fill="#ffffff" stroke="#8a8a8a" stroke-width="1.8"/><path d="M 13.5 1 L 13.5 7.5 L 20 7.5 Z" fill="#a0a0a0" stroke="#7a7a7a" stroke-width="1.2"/></svg>
<div class="t" style="left:459px;top:1095.9px;font-size:20.85px;color:#2e2e2e;">03.03.2020</div>
<div class="t" style="left:648px;top:1095.9px;font-size:20.85px;color:#2e2e2e;">Commande projet 2745/0 - 10</div>
<div class="t" style="left:1009px;top:1095.9px;font-size:20.85px;color:#2e2e2e;">AA</div>
<div class="t" style="left:1309px;top:1095.9px;font-size:20.85px;color:#2e2e2e;">RMARCH ...</div>
<div class="t" style="left:2071.0px;width:100px;text-align:right;top:1095.9px;font-size:20.85px;color:#2e2e2e;">-1.0000</div>
<div class="b" style="left:309px;top:1130.5500000000002px;width:2082px;height:41.35px;background:#f9f9f9;"></div>
<svg style="left:357px;top:1135.5500000000002px" width="24" height="30"><polyline points="4.5,10.4 10.8,16.6 17,10.4" fill="none" stroke="#575757" stroke-width="2.8"/></svg>
<svg style="left:388px;top:1135.5500000000002px" width="28" height="26"><path d="M 1 23.8 L 1 1.2 L 11.5 1.2 L 13.5 4.2 L 26.2 4.2 L 26.2 23.8 Z" fill="#fffefa" stroke="#efd3a0" stroke-width="2"/></svg>
<div class="t" style="left:426px;top:1137.2500000000002px;font-size:20.85px;color:#111111;font-weight:bold;">Approvisionnements</div>
<div class="t" style="left:1381.5px;width:150px;text-align:right;top:1137.2500000000002px;font-size:20.85px;color:#111111;font-weight:bold;">14.0000</div>
<div class="t" style="left:1537.0px;width:100px;text-align:right;top:1137.2500000000002px;font-size:20.85px;color:#111111;font-weight:bold;">0.0000</div>
<div class="t" style="left:1643.5px;width:100px;text-align:right;top:1137.2500000000002px;font-size:20.85px;color:#111111;font-weight:bold;">0.0000</div>
<div class="t" style="left:1750.5px;width:100px;text-align:right;top:1137.2500000000002px;font-size:20.85px;color:#111111;font-weight:bold;">0.0000</div>
<div class="t" style="left:1857.2px;width:100px;text-align:right;top:1137.2500000000002px;font-size:20.85px;color:#111111;font-weight:bold;">3.0000</div>
<div class="t" style="left:1964.0px;width:100px;text-align:right;top:1137.2500000000002px;font-size:20.85px;color:#111111;font-weight:bold;">5.0000</div>
<div class="t" style="left:2071.0px;width:100px;text-align:right;top:1137.2500000000002px;font-size:20.85px;color:#111111;font-weight:bold;">0.0000</div>
<div class="t" style="left:2177.5px;width:100px;text-align:right;top:1137.2500000000002px;font-size:20.85px;color:#111111;font-weight:bold;">1.0000</div>
<div class="t" style="left:2284.5px;width:100px;text-align:right;top:1137.2500000000002px;font-size:20.85px;color:#111111;font-weight:bold;">5.0000</div>
<div class="b" style="left:309px;top:1171.9px;width:2082px;height:41.35px;background:#fefefe;"></div>
<svg style="left:424px;top:1176.7px" width="23" height="28"><path d="M 1 1 L 13.5 1 L 20 7.5 L 20 25.5 L 1 25.5 Z" fill="#ffffff" stroke="#8a8a8a" stroke-width="1.8"/><path d="M 13.5 1 L 13.5 7.5 L 20 7.5 Z" fill="#a0a0a0" stroke="#7a7a7a" stroke-width="1.2"/></svg>
<div class="t" style="left:459px;top:1178.6000000000001px;font-size:20.85px;color:#2e2e2e;">27.02.2020</div>
<div class="t" style="left:648px;top:1178.6000000000001px;font-size:20.85px;color:#2e2e2e;">GPAO Commande - 14033</div>
<div class="t" style="left:1009px;top:1178.6000000000001px;font-size:20.85px;color:#2e2e2e;">PPSD</div>
<div class="t" style="left:1309px;top:1178.6000000000001px;font-size:20.85px;color:#2e2e2e;">RMARCH ...</div>
<div class="t" style="left:1857.2px;width:100px;text-align:right;top:1178.6000000000001px;font-size:20.85px;color:#2e2e2e;">3.0000</div>
<div class="b" style="left:309px;top:1213.25px;width:2082px;height:41.35px;background:#f9f9f9;"></div>
<svg style="left:424px;top:1218.05px" width="23" height="28"><path d="M 1 1 L 13.5 1 L 20 7.5 L 20 25.5 L 1 25.5 Z" fill="#ffffff" stroke="#8a8a8a" stroke-width="1.8"/><path d="M 13.5 1 L 13.5 7.5 L 20 7.5 Z" fill="#a0a0a0" stroke="#7a7a7a" stroke-width="1.2"/></svg>
<div class="t" style="left:459px;top:1219.95px;font-size:20.85px;color:#2e2e2e;">28.02.2020</div>
<div class="t" style="left:648px;top:1219.95px;font-size:20.85px;color:#2e2e2e;">GPAO Commande - 13923</div>
<div class="t" style="left:1009px;top:1219.95px;font-size:20.85px;color:#2e2e2e;">PPSD</div>
<div class="t" style="left:1309px;top:1219.95px;font-size:20.85px;color:#2e2e2e;">RMARCH ...</div>
<div class="t" style="left:1964.0px;width:100px;text-align:right;top:1219.95px;font-size:20.85px;color:#2e2e2e;">5.0000</div>
<div class="b" style="left:309px;top:1254.6px;width:2082px;height:41.35px;background:#fefefe;"></div>
<svg style="left:424px;top:1259.3999999999999px" width="23" height="28"><path d="M 1 1 L 13.5 1 L 20 7.5 L 20 25.5 L 1 25.5 Z" fill="#ffffff" stroke="#8a8a8a" stroke-width="1.8"/><path d="M 13.5 1 L 13.5 7.5 L 20 7.5 Z" fill="#a0a0a0" stroke="#7a7a7a" stroke-width="1.2"/></svg>
<div class="t" style="left:459px;top:1261.3px;font-size:20.85px;color:#2e2e2e;">26.05.2020</div>
<div class="t" style="left:648px;top:1261.3px;font-size:20.85px;color:#2e2e2e;">GPAO Commande - 14041</div>
<div class="t" style="left:1009px;top:1261.3px;font-size:20.85px;color:#2e2e2e;">PPSD</div>
<div class="t" style="left:1309px;top:1261.3px;font-size:20.85px;color:#2e2e2e;">RMARCH ...</div>
<div class="t" style="left:2177.5px;width:100px;text-align:right;top:1261.3px;font-size:20.85px;color:#2e2e2e;">1.0000</div>
<div class="b" style="left:309px;top:1295.95px;width:2082px;height:41.35px;background:#f9f9f9;"></div>
<svg style="left:424px;top:1300.75px" width="23" height="28"><path d="M 1 1 L 13.5 1 L 20 7.5 L 20 25.5 L 1 25.5 Z" fill="#ffffff" stroke="#8a8a8a" stroke-width="1.8"/><path d="M 13.5 1 L 13.5 7.5 L 20 7.5 Z" fill="#a0a0a0" stroke="#7a7a7a" stroke-width="1.2"/></svg>
<div class="t" style="left:459px;top:1302.65px;font-size:20.85px;color:#2e2e2e;">10.07.2020</div>
<div class="t" style="left:648px;top:1302.65px;font-size:20.85px;color:#2e2e2e;">GPAO Commande - 13924</div>
<div class="t" style="left:1009px;top:1302.65px;font-size:20.85px;color:#2e2e2e;">PPSD</div>
<div class="t" style="left:1309px;top:1302.65px;font-size:20.85px;color:#2e2e2e;">RMARCH ...</div>
<div class="t" style="left:2284.5px;width:100px;text-align:right;top:1302.65px;font-size:20.85px;color:#2e2e2e;">5.0000</div>
<div class="b" style="left:309px;top:1337.3000000000002px;width:2082px;height:41.35px;background:#fefefe;"></div>
<svg style="left:388px;top:1342.3000000000002px" width="28" height="26"><path d="M 1 23.8 L 1 1.2 L 11.5 1.2 L 13.5 4.2 L 26.2 4.2 L 26.2 23.8 Z" fill="#fffefa" stroke="#efd3a0" stroke-width="2"/></svg>
<div class="t" style="left:428px;top:1344.0000000000002px;font-size:20.85px;color:#111111;font-weight:bold;">Traitement dispo</div>
<div class="t" style="left:1381.5px;width:150px;text-align:right;top:1344.0000000000002px;font-size:20.85px;color:#111111;font-weight:bold;">0.0000</div>
<div class="t" style="left:1537.0px;width:100px;text-align:right;top:1344.0000000000002px;font-size:20.85px;color:#111111;font-weight:bold;">0.0000</div>
<div class="t" style="left:1643.5px;width:100px;text-align:right;top:1344.0000000000002px;font-size:20.85px;color:#111111;font-weight:bold;">0.0000</div>
<div class="t" style="left:1750.5px;width:100px;text-align:right;top:1344.0000000000002px;font-size:20.85px;color:#111111;font-weight:bold;">0.0000</div>
<div class="t" style="left:1857.2px;width:100px;text-align:right;top:1344.0000000000002px;font-size:20.85px;color:#111111;font-weight:bold;">0.0000</div>
<div class="t" style="left:1964.0px;width:100px;text-align:right;top:1344.0000000000002px;font-size:20.85px;color:#111111;font-weight:bold;">0.0000</div>
<div class="t" style="left:2071.0px;width:100px;text-align:right;top:1344.0000000000002px;font-size:20.85px;color:#111111;font-weight:bold;">0.0000</div>
<div class="t" style="left:2177.5px;width:100px;text-align:right;top:1344.0000000000002px;font-size:20.85px;color:#111111;font-weight:bold;">0.0000</div>
<div class="t" style="left:2284.5px;width:100px;text-align:right;top:1344.0000000000002px;font-size:20.85px;color:#111111;font-weight:bold;">0.0000</div>
<div class="b" style="left:1535.5px;top:593px;width:1.5px;height:780px;background:#6a6a6a;"></div>
<div class="b" style="left:1535.5px;top:553px;width:1.5px;height:40px;background:#b0b0b0;"></div>
<div class="b" style="left:2534px;top:455px;width:26px;height:918px;background:#ffffff;border-left:2px solid #bdbdbd;"></div>
<div class="b" style="left:2536px;top:455px;width:24px;height:20px;background:#ffffff;border:1px solid #dddddd;"></div>
<svg style="left:2538px;top:458px" width="20" height="14"><polygon points="4,11 10,5 16,11" fill="#a8a8a8"/></svg>
<div class="b" style="left:2536px;top:1164px;width:24px;height:188px;background:#d8d8d8;"></div>
<div class="b" style="left:2536px;top:1352px;width:24px;height:20px;background:#ffffff;border:1px solid #dddddd;"></div>
<svg style="left:2538px;top:1355px" width="20" height="14"><polygon points="4,4 10,10 16,4" fill="#a8a8a8"/></svg>
<div class="b" style="left:2536px;top:475px;width:24px;height:690px;background:#ffffff;border-bottom:2px solid #c8c8c8;"></div>
<div class="b" style="left:272px;top:1373px;width:2262px;height:27px;background:#d8d8d8;border-top:2px solid #c2c2c2;"></div>
<div class="b" style="left:272px;top:1375px;width:20px;height:25px;background:#ffffff;border:1px solid #dddddd;"></div>
<svg style="left:276px;top:1380px" width="14" height="16"><polygon points="10,3 4,8 10,13" fill="#b0b0b0"/></svg>
<div class="b" style="left:292px;top:1375px;width:1938px;height:25px;background:#ffffff;border-left:2px solid #c9c9c9;"></div>
<div class="b" style="left:2512px;top:1375px;width:20px;height:25px;background:#ffffff;border:1px solid #dddddd;"></div>
<svg style="left:2516px;top:1380px" width="14" height="16"><polygon points="4,3 10,8 4,13" fill="#b0b0b0"/></svg>
<div class="b" style="left:2534px;top:1373px;width:26px;height:27px;background:#ececec;"></div>
<div class="b" style="left:262px;top:765px;width:2px;height:26px;background:#bcbcbc;"></div>
<div class="b" style="left:0px;top:1400px;width:2560px;height:40px;background:#f5f5f5;border-top:2px solid #c8c8c8;"></div>
<div class="b" style="left:0px;top:1437px;width:2560px;height:3px;background:#3a3a3a;"></div>
<div class="t" style="left:327px;top:1411px;font-size:19px;color:#2a2a2a;transform:scale(0.95,1.14);transform-origin:0 62%;">DISPONIBILITÉ THÉORIQUE POUR FOURNISSEUR CRE USINE 1: 19.07.2021</div>
</body></html>
